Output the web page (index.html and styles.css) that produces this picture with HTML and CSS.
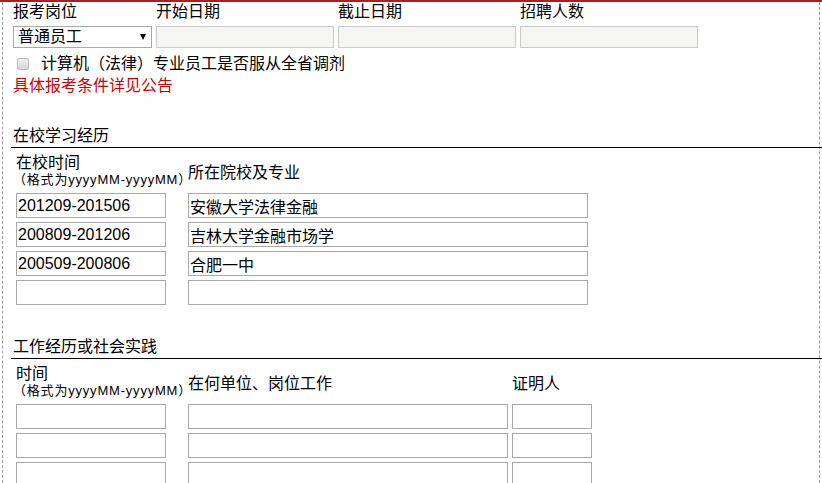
FILE: index.html
```html
<!DOCTYPE html>
<html lang="zh-CN">
<head>
<meta charset="utf-8">
<title>报名表</title>
<link rel="stylesheet" href="styles.css">
</head>
<body>
<div class="page">
  <div class="frame">
    <div class="fields">
      <div class="field field-select">
        <div class="label">报考岗位</div>
        <div class="select"><span>普通员工</span><span class="arrow"></span></div>
      </div>
      <div class="field">
        <div class="label">开始日期</div>
        <input class="ro" type="text" disabled>
      </div>
      <div class="field">
        <div class="label">截止日期</div>
        <input class="ro" type="text" disabled>
      </div>
      <div class="field">
        <div class="label">招聘人数</div>
        <input class="ro" type="text" disabled>
      </div>
    </div>

    <label class="check"><input class="box" type="checkbox" disabled>计算机（法律）专业员工是否服从全省调剂</label>
    <p class="notice">具体报考条件详见公告</p>

    <section class="block">
      <h3 class="block-title">在校学习经历</h3>
      <div class="grid grid-edu">
        <div class="th">
          <div class="th-main">在校时间</div>
          <div class="fmt">（格式为yyyyMM-yyyyMM）</div>
        </div>
        <div class="th th-mid">所在院校及专业</div>

        <input class="cell c-time" type="text" value="201209-201506">
        <input class="cell c-school" type="text" value="安徽大学法律金融">
        <input class="cell c-time" type="text" value="200809-201206">
        <input class="cell c-school" type="text" value="吉林大学金融市场学">
        <input class="cell c-time" type="text" value="200509-200806">
        <input class="cell c-school" type="text" value="合肥一中">
        <input class="cell c-time" type="text" value="">
        <input class="cell c-school" type="text" value="">
      </div>
    </section>

    <section class="block block-work">
      <h3 class="block-title">工作经历或社会实践</h3>
      <div class="grid grid-work">
        <div class="th">
          <div class="th-main">时间</div>
          <div class="fmt">（格式为yyyyMM-yyyyMM）</div>
        </div>
        <div class="th th-mid">在何单位、岗位工作</div>
        <div class="th th-mid">证明人</div>

        <input class="cell c-time" type="text">
        <input class="cell c-unit" type="text">
        <input class="cell c-witness" type="text">
        <input class="cell c-time" type="text">
        <input class="cell c-unit" type="text">
        <input class="cell c-witness" type="text">
        <input class="cell c-time" type="text">
        <input class="cell c-unit" type="text">
        <input class="cell c-witness" type="text">
      </div>
    </section>
  </div>
</div>
</body>
</html>
```

FILE: styles.css
```css
* { box-sizing: border-box; }

html, body {
  margin: 0;
  padding: 0;
  background: #fff;
  overflow: hidden;
}

body {
  font-family: "Liberation Sans", "Noto Sans CJK SC", sans-serif;
  font-size: 16px;
  color: #000;
}

.page {
  border-top: 2px solid #a52020;
  height: 483px;
}

.frame {
  margin: 0 2px;
  height: 100%;
  border-left: 1px dashed #9a9a9a;
  border-right: 1px dashed #9a9a9a;
  padding-left: 10px;
}

.fields {
  display: flex;
  gap: 4px;
}

.field {
  display: flex;
  flex-direction: column;
  gap: 4px;
}

.label {
  line-height: 20px;
  height: 20px;
}

.select {
  width: 139px;
  height: 22px;
  border: 1px solid #a9a9a9;
  background: #fff;
  display: flex;
  align-items: center;
  justify-content: space-between;
  padding: 0 5px 0 4px;
  line-height: 20px;
}

.arrow {
  width: 0;
  height: 0;
  border-left: 3.5px solid transparent;
  border-right: 3.5px solid transparent;
  border-top: 6px solid #000;
}

.ro {
  width: 178px;
  height: 22px;
  margin: 0;
  border: 1px solid #cbcbcb;
  background: #f5f5f3;
  font: inherit;
}

.check {
  display: flex;
  align-items: center;
  margin-top: 6px;
  line-height: 20px;
  height: 20px;
}

.box {
  appearance: none;
  -webkit-appearance: none;
  width: 12px;
  height: 12px;
  margin: 0 12px 0 4px;
  border: 1px solid #bdbdbd;
  border-radius: 2px;
  background: linear-gradient(#f2f2f2, #d6d6d6);
}

.notice {
  margin: 2px 0 0;
  line-height: 20px;
  color: #d40000;
}

.block {
  margin-top: 30px;
}

.block-work {
  margin-top: 32px;
}

.block-title {
  margin: 0 -3px 0 -2px;
  padding: 0 0 1px 2px;
  font-size: 16px;
  font-weight: normal;
  line-height: 20px;
  border-bottom: 1px solid #000;
}

.grid {
  display: grid;
  row-gap: 4px;
  margin-left: 3px;
  padding-top: 5px;
}

.grid-edu {
  grid-template-columns: 172px 400px;
}

.grid-work {
  grid-template-columns: 172px 324px 80px;
}

.th {
  margin-bottom: 2px;
}

.th-main {
  line-height: 19px;
}

.fmt {
  font-family: "Liberation Sans", "Noto Sans CJK SC", sans-serif;
  font-size: 13px;
  line-height: 15px;
  letter-spacing: 0.8px;
  white-space: nowrap;
  margin-left: -3px;
}

.th-mid {
  align-self: end;
  line-height: 20px;
  margin-bottom: 6px;
}

.cell {
  height: 25px;
  margin: 0;
  padding: 0 1px;
  border: 1px solid #a9a9a9;
  background: #fff;
  font: inherit;
  color: #000;
}

.c-time { width: 150px; }
.c-school { width: 400px; }
.c-unit { width: 320px; }
.c-witness { width: 80px; }
```
